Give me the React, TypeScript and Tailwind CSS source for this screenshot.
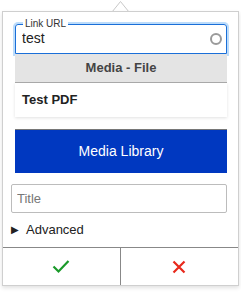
import { useState } from "react";

const CheckIcon = () => (
  <svg width="18" height="15" viewBox="0 0 18 15" fill="none">
    <path d="M1.5 7.5 L6.5 12.5 L16.5 2" stroke="#1a9a2a" strokeWidth="2.2" />
  </svg>
);

const CrossIcon = () => (
  <svg width="14" height="14" viewBox="0 0 14 14" fill="none">
    <path d="M1.5 1.5 L12.5 12.5 M12.5 1.5 L1.5 12.5" stroke="#e8291c" strokeWidth="2.2" />
  </svg>
);

const App = () => {
  const [url, setUrl] = useState("test");
  const [title, setTitle] = useState("");

  return (
    <div className="relative w-[241px] h-[294px] bg-white overflow-hidden font-['Liberation_Sans',Arial,sans-serif]">
      {/* caret */}
      <svg
        className="absolute left-[112px] top-[1px]"
        width="17"
        height="12"
        viewBox="0 0 17 12"
      >
        <path d="M0 11 L8.5 0.5 L17 11" fill="white" stroke="#c8c8c8" strokeWidth="1" />
      </svg>

      <div className="absolute left-[2px] top-[11px] w-[237px] h-[275px] bg-white border border-[#cfcfcf] shadow-[0_2px_4px_rgba(0,0,0,0.12)] flex flex-col">
        <div className="pl-[8px] pr-[11px] pt-[12px] flex flex-col">
          <div className="ml-[4px] flex flex-col">
            <div className="relative h-[30px] border border-[#1a6fd8] rounded-t-[3px] shadow-[0_0_0_2px_#bcdcfb]">
              <span className="absolute left-[7px] top-[-7px] bg-white px-[2px] text-[10px] leading-[12px] text-[#333]">
                Link URL
              </span>
              <input
                value={url}
                onChange={(e) => setUrl(e.target.value)}
                className="w-full h-full pl-[6px] pr-[24px] pb-[3px] text-[14px] text-[#222] outline-none bg-transparent"
              />
              <span className="absolute right-[4px] top-[8px] w-[12px] h-[12px] rounded-full border-2 border-[#9a9a9a]" />
            </div>
            <div className="relative h-[29px] bg-[#e4e4e4] border-b border-[#a8a8a8] flex items-center justify-center text-[13px] font-bold text-[#444]">
              Media - File
            </div>
            <div className="h-[34px] bg-white shadow-[0_1px_3px_rgba(0,0,0,0.12)] flex items-center pl-[7px] text-[13px] font-bold text-[#222]">
              Test PDF
            </div>
            <button className="mt-[12px] h-[44px] bg-[#0038c0] border-t border-[#777] text-white text-[14px] flex items-center justify-center">
              Media Library
            </button>
          </div>
          <input
            value={title}
            onChange={(e) => setTitle(e.target.value)}
            placeholder="Title"
            className="mt-[11px] h-[29px] border border-[#bcbcbc] rounded-[2px] px-[5px] text-[13px] text-[#222] placeholder:text-[#777] outline-none"
          />
          <div className="h-[34px] flex items-center gap-[7px] text-[13px] text-[#222]">
            <span className="text-[10px] leading-none">▶</span>
            <span>Advanced</span>
          </div>
        </div>
        <div className="flex-1 grid grid-cols-2 border-t border-[#888]">
          <button className="flex items-center justify-center border-r border-[#888]">
            <CheckIcon />
          </button>
          <button className="flex items-center justify-center">
            <CrossIcon />
          </button>
        </div>
      </div>
    </div>
  );
};

export default App;
